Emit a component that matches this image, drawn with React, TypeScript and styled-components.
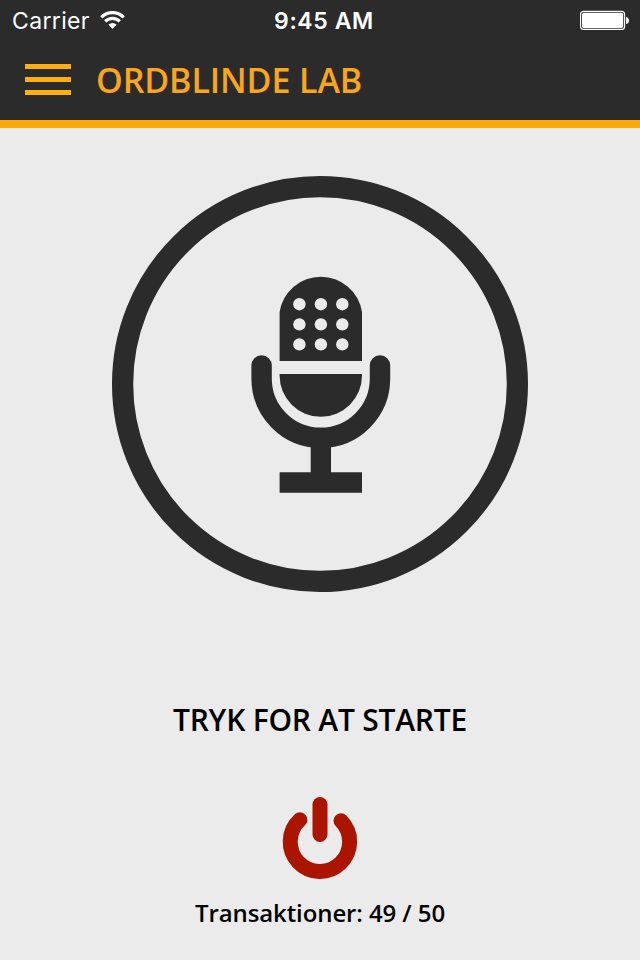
import React from "react";
import styled, { createGlobalStyle } from "styled-components";

const ink = "#2b2b2b";
const paper = "#ebebeb";
const amber = "#ffa60a";

const GlobalStyle = createGlobalStyle`
  * { box-sizing: border-box; }
  body { margin: 0; background: ${paper}; }
  button { border: 0; padding: 0; background: none; display: block; cursor: pointer; }
  svg { display: block; }
`;

const Screen = styled.div`
  width: 640px;
  height: 960px;
  display: flex;
  flex-direction: column;
  background: ${paper};
  font-family: "Open Sans", sans-serif;
  overflow: hidden;
`;

const Header = styled.header`
  height: 128px;
  flex: none;
  background: ${ink};
  border-bottom: 8px solid ${amber};
`;

const StatusBar = styled.div`
  height: 40px;
  display: grid;
  grid-template-columns: 1fr auto 1fr;
  align-items: center;
  padding: 0 10px 0 12px;
  color: #fff;
  font-family: Inter, sans-serif;
  line-height: 38px;
`;

const Network = styled.div`
  display: flex;
  align-items: center;
  gap: 10px;
`;

const Carrier = styled.span`
  width: 78px;
  padding-top: 2px;
  font-size: 23px;
  letter-spacing: 0.35px;
  white-space: nowrap;
`;

const Clock = styled.span`
  padding: 2px 0 0 6px;
  font-size: 23px;
  font-weight: 600;
  letter-spacing: 0.6px;
  white-space: nowrap;
`;

const BatterySlot = styled.div`
  justify-self: end;
`;

const TitleBar = styled.div`
  height: 80px;
  display: flex;
  align-items: center;
  padding-left: 25px;
  gap: 25px;
`;

const MenuButton = styled.button`
  width: 46px;
  height: 31px;
  margin-bottom: 1px;
  && { display: flex; }
  flex-direction: column;
  justify-content: space-between;
`;

const MenuLine = styled.span`
  height: 5px;
  width: 46px;
  background: #fdb00d;
`;

const Title = styled.h1`
  margin: 0;
  color: #faa61a;
  font-size: 34px;
  font-weight: 600;
  line-height: 80px;
  letter-spacing: -0.1px;
  white-space: nowrap;
`;

const Main = styled.main`
  flex: 1;
  display: flex;
  flex-direction: column;
  align-items: center;
  padding-top: 48px;
`;

const Prompt = styled.p`
  margin: 108px 0 0;
  height: 40px;
  color: #000;
  font-size: 30px;
  font-weight: 600;
  line-height: 40px;
  letter-spacing: -0.22px;
  white-space: nowrap;
`;

const PowerButton = styled.button`
  margin-top: 56px;
`;

const Counter = styled.p`
  margin: 17px 0 0;
  color: #000;
  font-size: 24px;
  font-weight: 600;
  line-height: 32px;
  letter-spacing: -0.1px;
  white-space: nowrap;
`;

const WifiIcon = () => (
  <svg width="25" height="18" viewBox="0 0 25 18" fill="none" stroke="#fff" strokeWidth="3.2">
    <path d="M1.3 6.3A15.6 15.6 0 0 1 23.7 6.3" />
    <path d="M5.2 10.4A10.2 10.2 0 0 1 19.8 10.4" />
    <path d="M8.4 13.6Q12.5 10.2 16.6 13.6L12.5 17.9Z" fill="#fff" stroke="none" />
  </svg>
);

const BatteryIcon = () => (
  <svg width="50" height="20" viewBox="0 0 50 20">
    <rect x="0.6" y="1.4" width="44" height="18" rx="3" fill="none" stroke="#fff" strokeWidth="1.1" />
    <rect x="2" y="2.8" width="41.2" height="15.2" rx="1.8" fill="#fff" />
    <path d="M46 7Q49 7.5 49 10.5T46 14Z" fill="#fff" />
  </svg>
);

const dotColumns = [299.4, 320.9, 342.3];
const dotRows = [304.2, 324.4, 344.4];

const MicrophoneIcon = () => (
  <svg width="416" height="416" viewBox="112 176 416 416">
    <circle cx="320" cy="384" r="197.4" fill="none" stroke={ink} strokeWidth="21.2" />
    <path d="M279.6 361V312A41.7 41.7 0 0 1 362 312V361Z" fill={ink} />
    {dotRows.map((y) => dotColumns.map((x) => <circle key={`${x}-${y}`} cx={x} cy={y} r="6.2" fill={paper} />))}
    <path d="M279.6 374H362V375.6A41.2 41.2 0 0 1 279.6 375.6Z" fill={ink} />
    <path
      d="M261.6 365.5V378.6A59.2 59.2 0 0 0 380 378.6V365.5"
      fill="none"
      stroke={ink}
      strokeWidth="20.4"
      strokeLinecap="round"
    />
    <path d="M310.7 440H331V472.3H362V492.8H279.6V472.3H310.7Z" fill={ink} />
  </svg>
);

const PowerIcon = () => (
  <svg width="76" height="84" viewBox="282 796 76 84" fill="none" stroke="#ab1500" strokeWidth="15" strokeLinecap="round">
    <path d="M320 804.6V834.4" />
    <path d="M299.9 819.8A29.7 29.7 0 1 0 341 820.8" />
  </svg>
);

export default function App() {
  return (
    <Screen>
      <GlobalStyle />
      <Header>
        <StatusBar>
          <Network>
            <Carrier>Carrier</Carrier>
            <WifiIcon />
          </Network>
          <Clock>9:45 AM</Clock>
          <BatterySlot>
            <BatteryIcon />
          </BatterySlot>
        </StatusBar>
        <TitleBar>
          <MenuButton aria-label="Menu">
            <MenuLine />
            <MenuLine />
            <MenuLine />
          </MenuButton>
          <Title>ORDBLINDE LAB</Title>
        </TitleBar>
      </Header>
      <Main>
        <button aria-label="Start">
          <MicrophoneIcon />
        </button>
        <Prompt>TRYK FOR AT STARTE</Prompt>
        <PowerButton aria-label="Power">
          <PowerIcon />
        </PowerButton>
        <Counter>Transaktioner: 49 / 50</Counter>
      </Main>
    </Screen>
  );
}
